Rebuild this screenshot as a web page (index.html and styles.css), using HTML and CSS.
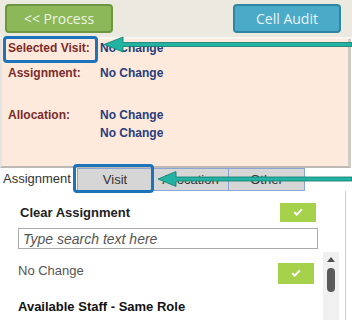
FILE: index.html
```html
<!DOCTYPE html>
<html lang="en">
<head>
  <meta charset="UTF-8">
  <title>Visit Edit</title>
  <meta name="viewport" content="width=device-width, initial-scale=1.0">
  <link rel="stylesheet" href="styles.css">
</head>
<body>
  <header class="topbar">
    <button class="btn btn-process">&lt;&lt; Process</button>
    <button class="btn btn-audit">Cell Audit</button>
  </header>

  <section class="visit-panel">
    <div class="row r1"><span class="lbl">Selected Visit:</span><span class="val">No Change</span></div>
    <div class="row r2"><span class="lbl">Assignment:</span><span class="val">No Change</span></div>
    <div class="row r3"><span class="lbl">Allocation:</span><span class="val">No Change</span></div>
    <div class="row"><span class="lbl"></span><span class="val">No Change</span></div>
  </section>

  <nav class="tabs">
    <span class="tab tab-plain">Assignment</span>
    <span class="tab tab-visit">Visit</span>
    <span class="tab">Allocation</span>
    <span class="tab">Other</span>
  </nav>

  <section class="tab-panel">
    <div class="head-row">
      <span class="head">Clear Assignment</span>
      <button class="ok"><svg width="10" height="8" viewBox="0 0 10 8"><path d="M1.2 4.2 L3.8 6.6 L8.8 1.4" fill="none" stroke="#fff" stroke-width="2"/></svg></button>
    </div>
    <input class="search" type="text" placeholder="Type search text here">
    <div class="list">
      <div class="items">
        <div class="item">
          <span>No Change</span>
          <button class="ok"><svg width="10" height="8" viewBox="0 0 10 8"><path d="M1.2 4.2 L3.8 6.6 L8.8 1.4" fill="none" stroke="#fff" stroke-width="2"/></svg></button>
        </div>
        <div class="group">Available Staff - Same Role</div>
      </div>
      <div class="scrollbar">
        <svg class="up" width="8" height="5" viewBox="0 0 8 5"><path d="M0 5 L4 0 L8 5 Z" fill="#505050"/></svg>
        <div class="thumb"></div>
      </div>
    </div>
  </section>

  <!-- callouts drawn over the screenshot -->
  <div class="callout c1"></div>
  <div class="callout c2"></div>
  <svg class="arrows" width="352" height="320" viewBox="0 0 352 320">
    <g fill="#22b3a3" stroke="#137a70" stroke-width="0.8">
      <path d="M352 42.5 L123 42.5 L123 37 L104 44.5 L123 52 L123 46.5 L352 46.5 Z"/>
      <path d="M352 177 L176 177 L176 171.5 L158 179 L176 186.5 L176 181 L352 181 Z"/>
    </g>
  </svg>
</body>
</html>
```

FILE: styles.css
```css
* { margin: 0; padding: 0; box-sizing: border-box; }
body {
  font-family: 'Liberation Sans', Arial, sans-serif;
  background: #fff;
  color: #333;
  width: 352px;
  height: 320px;
  overflow: hidden;
  position: relative;
}

/* Top bar */
.topbar {
  display: flex;
  justify-content: space-between;
  align-items: flex-start;
  height: 39px;
  padding: 4px 11px 0 5px;
  background: #ebe9e0;
  border-bottom: 2px solid #f6f5f1;
}
.btn {
  font-family: 'Open Sans', sans-serif;
  font-size: 14px;
  height: 29px;
  border-radius: 4px;
  cursor: pointer;
}
.btn-process {
  width: 108px;
  background: #8cb85a;
  border: 2px solid #6c963f;
  color: #eef4e6;
}
.btn-audit {
  width: 108px;
  background: #4aaac7;
  border: 2px solid #2f86a3;
  color: #e6f3f8;
}

/* Selected visit summary */
.visit-panel {
  height: 129px;
  width: 351px;
  background: #fdeadc;
  border-left: 2px solid #e4e4e4;
  border-right: 3px solid #cfcac4;
  border-bottom: 2px solid #bdbab6;
  padding: 0 0 0 6px;
  font-size: 12px;
  font-weight: bold;
}
.row { display: flex; line-height: 18px; }
.lbl { width: 92px; color: #7b2b2b; }
.val { color: #2b3d7c; }
.r2 { margin-top: 7px; }
.r3 { margin-top: 24px; }

/* Tabs */
.tabs {
  display: flex;
  height: 23px;
  font-size: 13px;
}
.tab {
  width: 76px;
  text-align: center;
  line-height: 22px;
  background: #d6d6d6;
  border: 1px solid #8ba6d4;
  border-left: none;
  color: #333;
}
.tab-plain {
  width: 77px;
  text-align: left;
  padding-left: 3px;
  background: #fff;
  border: none;
}
.tab-visit { width: 76px; border-left: 1px solid #8ba6d4; }

/* Tab panel */
.tab-panel {
  width: 346px;
  height: 129px;
  border-right: 1px solid #bcd0ec;
  padding: 12px 0 0 18px;
}
.head-row {
  display: flex;
  justify-content: space-between;
  align-items: center;
  width: 298px;
  height: 18px;
}
.head { font-size: 13px; font-weight: bold; color: #222; padding-left: 2px; }
.ok {
  width: 36px;
  height: 19px;
  background: #a6d24b;
  border: none;
  display: flex;
  align-items: center;
  justify-content: center;
}
.search {
  display: block;
  margin-top: 7px;
  width: 300px;
  height: 21px;
  border: 1px solid #a9a9a9;
  padding: 0 4px;
  font-family: 'Liberation Sans', Arial, sans-serif;
  font-size: 14px;
}
.search::placeholder { color: #555; font-style: italic; }

.list { display: flex; margin-top: 3px; }
.items { width: 296px; padding-top: 10px; }
.item {
  display: flex;
  justify-content: space-between;
  align-items: center;
  height: 22px;
  font-size: 13px;
  color: #555;
}
.item span { margin-top: -5px; }
.item .ok { height: 21px; }
.group {
  margin-top: 15px;
  font-size: 13px;
  font-weight: bold;
  color: #111;
}
.scrollbar {
  width: 16px;
  height: 70px;
  margin-left: 9px;
  background: #f0f0f0;
  display: flex;
  flex-direction: column;
  align-items: center;
  padding-top: 5px;
}
.thumb {
  margin-top: 6px;
  width: 8px;
  height: 24px;
  border-radius: 4px;
  background: #5a5a5a;
}

/* Callouts */
.callout {
  position: absolute;
  border: 3px solid #1b74bb;
  border-radius: 4px;
}
.c1 { left: 3px; top: 36px; width: 95px; height: 27px; }
.c2 { left: 73px; top: 164px; width: 81px; height: 29px; }
.arrows { position: absolute; left: 0; top: 0; }
```
